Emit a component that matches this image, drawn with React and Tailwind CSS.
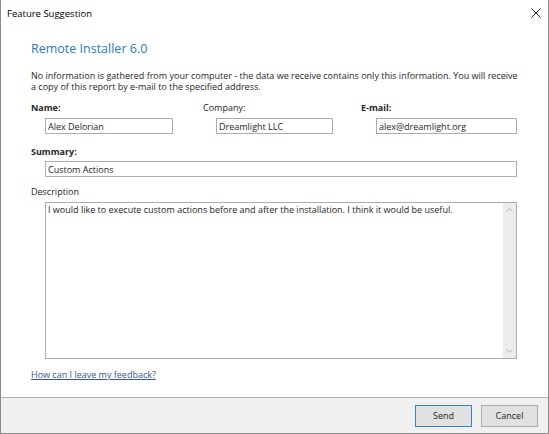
import React from "react";

function Input({ value, className = "" }) {
  return (
    <div
      className={`h-[16px] border border-[#abadb3] bg-white flex items-center pl-[2px] text-[9px] text-[#1e1e1e] leading-none ${className}`}
    >
      {value}
    </div>
  );
}

export default function App() {
  return (
    <div className="w-[549px] h-[434px] bg-white border-x border-b border-[#8a8a8a] flex flex-col font-['Open_Sans',sans-serif] text-[#262626] overflow-hidden">
      {/* Title bar */}
      <div className="h-[27px] flex items-center justify-between pl-[6px] pr-[7px]">
        <div className="text-[9.5px] text-black leading-none">Feature Suggestion</div>
        <svg width="10" height="10" viewBox="0 0 10 10" className="mb-[2px]">
          <path d="M0.5 0.5 L9.5 9.5 M9.5 0.5 L0.5 9.5" stroke="#222" strokeWidth="1" />
        </svg>
      </div>

      <div className="pl-[30px] pr-[30px] flex flex-col">
        <div className="mt-[14px] h-[16px] leading-[16px] text-[12.5px] text-[#2a7ac6]">
          Remote Installer 6.0
        </div>
        <div className="mt-[13px] text-[9px] leading-[11px] w-[490px]">
          No information is gathered from your computer - the data we receive contains only this information. You will receive a copy of this report by e-mail to the specified address.
        </div>

        {/* Name / Company / Email */}
        <div className="mt-[10px] flex">
          <div className="w-[172px] flex flex-col">
            <div className="h-[12px] leading-[12px] text-[9px] font-bold">Name:</div>
            <Input value="Alex Delorian" className="mt-[4px] ml-[14px] w-[128px]" />
          </div>
          <div className="w-[158px] flex flex-col">
            <div className="h-[12px] leading-[12px] text-[9px]">Company:</div>
            <Input value="Dreamlight LLC" className="mt-[4px] ml-[13px] w-[117px]" />
          </div>
          <div className="flex flex-col">
            <div className="h-[12px] leading-[12px] text-[9px] font-bold">E-mail:</div>
            <Input value="alex@dreamlight.org" className="mt-[4px] ml-[15px] w-[141px]" />
          </div>
        </div>

        <div className="mt-[12px] h-[12px] leading-[12px] text-[9px] font-bold">Summary:</div>
        <Input value="Custom Actions" className="mt-[3px] ml-[14px] w-[472px]" />

        <div className="mt-[9px] h-[12px] leading-[12px] text-[9px]">Description</div>
        <div className="mt-[4px] ml-[14px] w-[472px] h-[157px] border border-[#abadb3] flex">
          <div className="flex-1 pl-[2px] pt-[1px] text-[9px] leading-[12px] text-[#1e1e1e]">
            I would like to execute custom actions before and after the installation. I think it would be useful.
          </div>
          <div className="w-[13px] bg-[#ececec] flex flex-col items-center justify-between py-[5px]">
            <svg width="7" height="4" viewBox="0 0 7 4">
              <path d="M0.5 3.5 L3.5 0.5 L6.5 3.5" stroke="#b0b0b0" strokeWidth="1" fill="none" />
            </svg>
            <svg width="7" height="4" viewBox="0 0 7 4">
              <path d="M0.5 0.5 L3.5 3.5 L6.5 0.5" stroke="#b0b0b0" strokeWidth="1" fill="none" />
            </svg>
          </div>
        </div>

        <div className="mt-[10px] h-[12px] leading-[12px] text-[9px]">
          <a className="text-[#34559e] underline">How can I leave my feedback?</a>
        </div>
      </div>

      {/* Footer */}
      <div className="mt-auto h-[36px] border-t border-[#b4b4b4] bg-[#f0f0f0] flex items-center justify-end gap-[9px] pr-[10px]">
        <button className="w-[57px] h-[22px] bg-[#e1e1e1] border border-[#2f86d9] text-[9px] text-[#1e1e1e] leading-none">
          Send
        </button>
        <button className="w-[57px] h-[22px] bg-[#e1e1e1] border border-[#adadad] text-[9px] text-[#1e1e1e] leading-none">
          Cancel
        </button>
      </div>
    </div>
  );
}
